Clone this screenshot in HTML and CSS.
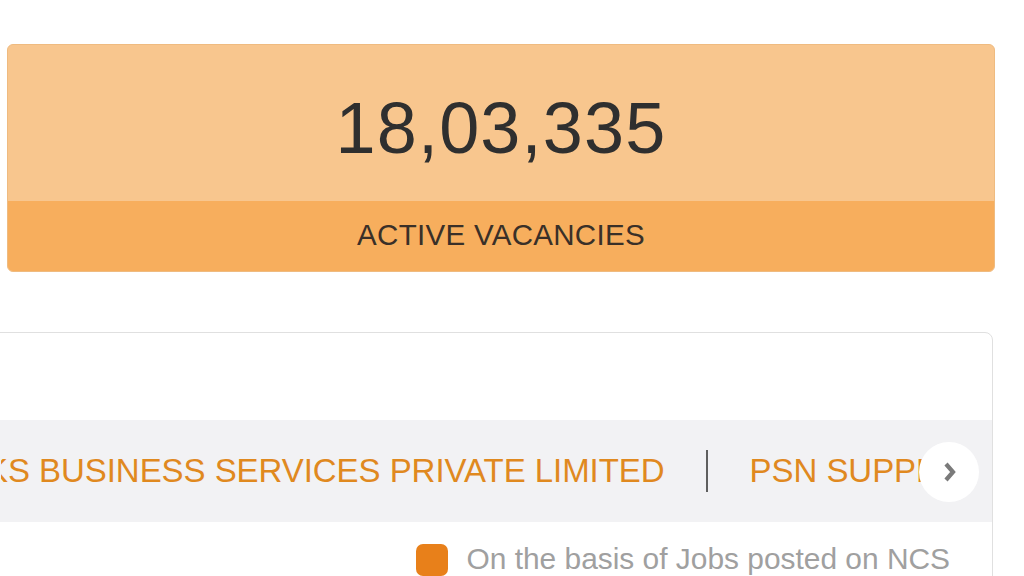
FILE: index.html
```html
<!DOCTYPE html>
<html lang="en">
<head>
<meta charset="utf-8">
<title>Active Vacancies</title>
<link rel="stylesheet" href="styles.css">
</head>
<body>
<div class="page">
  <section class="stat-card">
    <div class="stat-value">18,03,335</div>
    <div class="stat-label">ACTIVE VACANCIES</div>
  </section>

  <section class="employers">
    <div class="employers-head"></div>
    <div class="ticker">
      <div class="ticker-viewport">
        <div class="ticker-track">
          <span class="company">KS BUSINESS SERVICES PRIVATE LIMITED</span>
          <span class="sep"></span>
          <span class="company">PSN SUPPLIERS PRIVATE LIMITED</span>
        </div>
      </div>
      <button class="next" type="button" aria-label="Next">
        <svg width="16" height="24" viewBox="0 0 16 24">
          <polyline points="4,4 11,12 4,20" fill="none" stroke="#7a7a7a" stroke-width="4.2" stroke-linecap="butt" stroke-linejoin="miter"/>
        </svg>
      </button>
    </div>
    <div class="legend">
      <span class="swatch"></span>
      <span class="legend-text">On the basis of Jobs posted on NCS</span>
    </div>
  </section>
</div>
</body>
</html>
```

FILE: styles.css
```css
html, body {
  margin: 0;
  padding: 0;
  background: #ffffff;
  overflow: hidden;
}

body {
  font-family: "Liberation Sans", Arial, sans-serif;
  width: 1024px;
  height: 576px;
}

.page {
  height: 576px;
  overflow: hidden;
  padding: 44px 0 0 7px;
  box-sizing: border-box;
  display: flex;
  flex-direction: column;
}

.stat-card {
  flex: 0 0 auto;
  width: 988px;
  box-sizing: border-box;
  border: 1px solid #efbb80;
  border-radius: 6px;
  overflow: hidden;
  background: #f8c68e;
}

.stat-value {
  height: 156px;
  box-sizing: border-box;
  padding-top: 47px;
  text-align: center;
  font-size: 72px;
  letter-spacing: 1.2px;
  line-height: 1;
  color: #2f2f2f;
}

.stat-label {
  height: 70px;
  box-sizing: border-box;
  padding-top: 19px;
  background: #f7ae5d;
  text-align: center;
  font-size: 29.5px;
  letter-spacing: 0.3px;
  line-height: 1;
  color: #3a3028;
}

.employers {
  flex: 0 0 auto;
  margin-top: 60px;
  margin-left: -40px;
  width: 1026px;
  height: 300px;
  box-sizing: border-box;
  border: 1px solid #e0e0e0;
  border-radius: 8px;
  background: #ffffff;
}

.employers-head {
  height: 87px;
}

.ticker {
  position: relative;
  height: 102px;
  background: #f2f2f4;
}

.ticker-viewport {
  height: 100%;
  margin-left: 33px;
  width: 925px;
  overflow: hidden;
}

.ticker-track {
  height: 100%;
  display: flex;
  align-items: center;
  margin-left: -15px;
  white-space: nowrap;
}

.company {
  font-size: 33px;
  letter-spacing: -0.05px;
  line-height: 1;
  color: #e0891f;
  padding-bottom: 1px;
}

.sep {
  flex: 0 0 auto;
  width: 2px;
  height: 42px;
  margin: 0 42px 0 41px;
  background: #5f5f5f;
}

.next {
  position: absolute;
  left: 951px;
  top: 22px;
  width: 60px;
  height: 60px;
  padding: 0;
  border: none;
  border-radius: 50%;
  background: #ffffff;
  display: flex;
  align-items: center;
  justify-content: center;
  cursor: pointer;
}

.next svg {
  display: block;
  margin-left: 2px;
}

.legend {
  display: flex;
  align-items: center;
  justify-content: flex-end;
  padding: 22px 42px 0 0;
  gap: 18px;
}

.swatch {
  width: 32px;
  height: 32px;
  border-radius: 7px;
  background: #e8801a;
}

.legend-text {
  font-size: 29.9px;
  line-height: 1;
  color: #a0a0a0;
  padding-bottom: 2px;
}
```
